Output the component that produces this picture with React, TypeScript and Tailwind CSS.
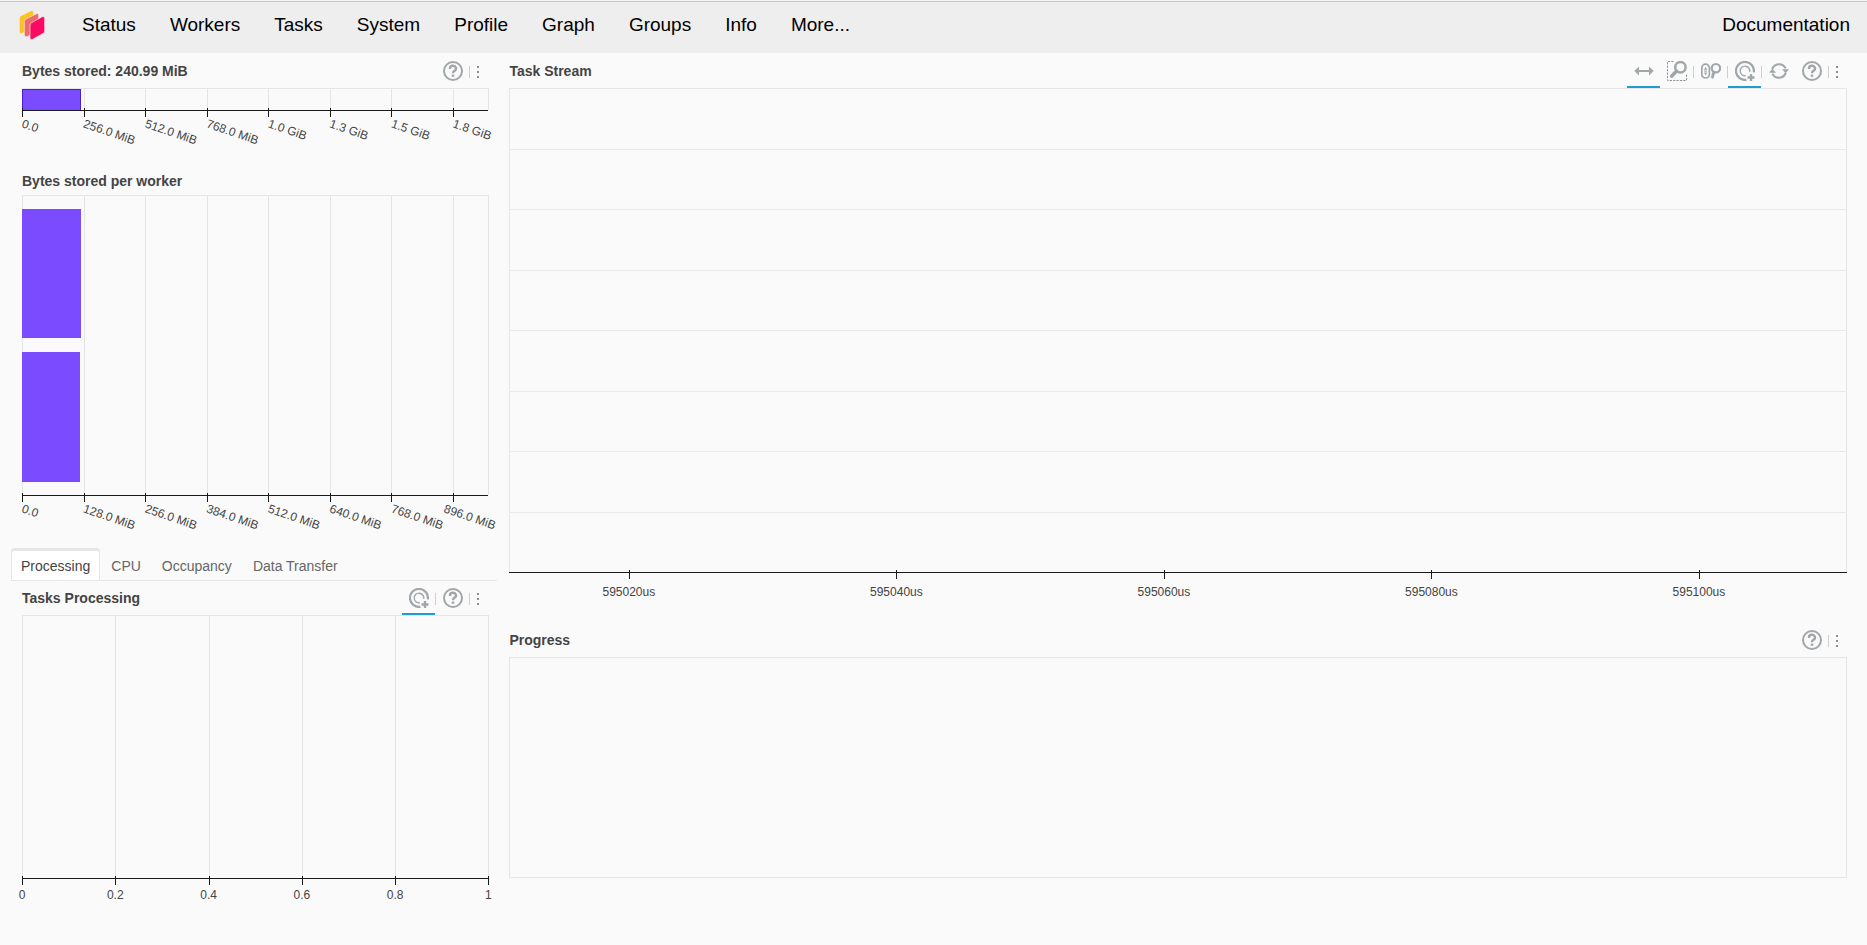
import { useState } from "react";
import type { ReactNode } from "react";
import clsx from "clsx";

interface Tick {
  at: number;
  label: string;
  shift?: number;
}

interface Bar {
  width: number;
  top: number;
  height: number;
  outlined?: boolean;
}

interface PlotProps {
  height: number;
  className: string;
  label: string;
  ticks?: Tick[];
  rows?: number;
  bars?: Bar[];
  verticalGrid?: boolean;
  slanted?: boolean;
  labelOffset?: number;
}

const NAV_ITEMS = [
  "Status",
  "Workers",
  "Tasks",
  "System",
  "Profile",
  "Graph",
  "Groups",
  "Info",
];

const TABS = ["Processing", "CPU", "Occupancy", "Data Transfer"];

const BYTE_STEP = 13.2;

const storedTicks: Tick[] = [
  "0.0",
  "256.0 MiB",
  "512.0 MiB",
  "768.0 MiB",
  "1.0 GiB",
  "1.3 GiB",
  "1.5 GiB",
  "1.8 GiB",
].map((label, i) => ({ at: i * BYTE_STEP, label }));

const workerTicks: Tick[] = [
  "0.0",
  "128.0 MiB",
  "256.0 MiB",
  "384.0 MiB",
  "512.0 MiB",
  "640.0 MiB",
  "768.0 MiB",
  "896.0 MiB",
].map((label, i) => ({ at: i * BYTE_STEP, label, shift: i === 7 ? -9 : 0 }));

const processingTicks: Tick[] = ["0", "0.2", "0.4", "0.6", "0.8", "1"].map(
  (label, i) => ({ at: i * 20, label }),
);

const streamTicks: Tick[] = [
  "595020us",
  "595040us",
  "595060us",
  "595080us",
  "595100us",
].map((label, i) => ({ at: 8.96 + i * 20, label }));

function DaskLogo() {
  return (
    <svg viewBox="0 0 72 84" className="w-6 h-7 overflow-visible" aria-hidden="true">
      <g stroke="#eeeeee" strokeWidth="2" strokeLinejoin="round">
        <path
          d="M3 14 L33 -1 Q41 -3 41 4 V46 L7 67 Q-2 70 -2 62 V21 Q-2 17 3 14Z"
          fill="#ffc11e"
        />
        <path
          d="M18 24 L50 8 Q56 6 56 12 V57 L22 77 Q13 79 13 72 V31 Q13 27 18 24Z"
          fill="#ef6b6b"
        />
        <path
          d="M35 35 L67 17 Q74 15 74 22 V61 Q74 65 70 67 L38 85 Q30 88 30 81 V42 Q30 38 35 35Z"
          fill="#fc0a62"
        />
      </g>
    </svg>
  );
}

function Icon({ children }: { children: ReactNode }) {
  return (
    <svg
      viewBox="0 0 20 20"
      className="w-5 h-5"
      fill="none"
      stroke="#a1a6a9"
      aria-hidden="true"
    >
      {children}
    </svg>
  );
}

function PanIcon() {
  return (
    <Icon>
      <path d="M3 10H17" strokeWidth="2" />
      <path d="M0.3 10L5 5.4V14.6Z M19.7 10L15 5.4V14.6Z" fill="#a1a6a9" stroke="none" />
    </Icon>
  );
}

function BoxZoomIcon() {
  return (
    <Icon>
      <path
        d="M6.5 0.5H0.5V19.5H19.5V12.5"
        strokeDasharray="2.2 1.2"
        stroke="#8f9396"
      />
      <circle cx="13.4" cy="6.2" r="5.2" strokeWidth="2.5" />
      <path d="M9.6 10L4.6 15.2" strokeWidth="3.4" strokeLinecap="round" />
    </Icon>
  );
}

function WheelZoomIcon() {
  return (
    <Icon>
      <rect x="0.8" y="3.2" width="7.6" height="13.8" rx="3.8" strokeWidth="1.7" />
      <path d="M4.6 6L6.3 8.8H2.9Z M4.6 14.2L6.3 11.4H2.9Z" fill="#a1a6a9" stroke="none" />
      <path d="M3 10.1H6.2" strokeWidth="1" />
      <circle cx="14.9" cy="7.2" r="4.2" strokeWidth="2.2" />
      <path d="M12.9 11L11.4 16.2" strokeWidth="2.8" strokeLinecap="round" />
    </Icon>
  );
}

function TapIcon() {
  return (
    <Icon>
      <path d="M18.8 11.4A9 9 0 1 0 11.4 18.8" strokeWidth="2.2" />
      <path d="M14.7 10.8A4.8 4.8 0 1 0 10.8 14.7" strokeWidth="1.4" />
      <path d="M16 13V20 M12.5 16.5H19.5" strokeWidth="2.4" />
    </Icon>
  );
}

function ResetIcon() {
  return (
    <Icon>
      <path d="M3.2 8.4A7.2 7.2 0 0 1 16.6 7.4" strokeWidth="2.1" />
      <path d="M16.8 11.6A7.2 7.2 0 0 1 3.4 12.6" strokeWidth="2.1" />
      <path d="M12.8 8.2H20L16.8 12Z M7.2 11.8H0L3.2 8Z" fill="#a1a6a9" stroke="none" />
    </Icon>
  );
}

function HelpIcon() {
  return (
    <Icon>
      <circle cx="10" cy="10" r="9" strokeWidth="2" />
      <path
        d="M7 8V7.6A3 2.7 0 1 1 11.4 9.8Q10 10.6 10 12.2"
        strokeWidth="2.4"
      />
      <path d="M10 13.6V15.8" strokeWidth="2.6" />
    </Icon>
  );
}

const TOOLS = {
  pan: { title: "Pan (x-axis)", icon: <PanIcon />, active: true, divider: false },
  boxZoom: { title: "Box Zoom", icon: <BoxZoomIcon />, active: false, divider: true },
  wheelZoom: { title: "Wheel Zoom (x-axis)", icon: <WheelZoomIcon />, active: false, divider: true },
  tap: { title: "Tap", icon: <TapIcon />, active: true, divider: true },
  reset: { title: "Reset", icon: <ResetIcon />, active: false, divider: false },
  help: { title: "Help", icon: <HelpIcon />, active: false, divider: true },
};

type Tool = keyof typeof TOOLS;

function Toolbar({ tools }: { tools: Tool[] }) {
  return (
    <div className="flex items-center pr-0.5">
      {tools.map((name) => {
        const tool = TOOLS[name];
        return (
          <div key={name} className="flex items-center">
            <button
              aria-label={tool.title}
              className={clsx(
                "flex w-[33px] h-[33px] items-center justify-center border-b-2",
                tool.active ? "border-[#1f9dd2]" : "border-transparent",
              )}
            >
              {tool.icon}
            </button>
            {tool.divider && <span className="w-px h-3 bg-[#cfcfcf]" />}
          </div>
        );
      })}
      <button
        aria-label="More tools"
        className="flex w-4 h-[33px] flex-col items-center justify-center gap-[3px]"
      >
        <span className="w-0.5 h-0.5 bg-[#8f8f8f]" />
        <span className="w-0.5 h-0.5 bg-[#8f8f8f]" />
        <span className="w-0.5 h-0.5 bg-[#8f8f8f]" />
      </button>
    </div>
  );
}

function PlotTitle({ title, tools }: { title: string; tools?: Tool[] }) {
  return (
    <div
      className={clsx(
        "flex items-start justify-between",
        tools ? "h-[33px]" : "h-[30px]",
      )}
    >
      <h2 className="pt-1.5 text-[14px] leading-5 font-bold text-[#444444]">
        {title}
      </h2>
      {tools && <Toolbar tools={tools} />}
    </div>
  );
}

function Plot({
  height,
  className,
  label,
  ticks = [],
  rows = 0,
  bars = [],
  verticalGrid = false,
  slanted = false,
  labelOffset = 21,
}: PlotProps) {
  return (
    <svg
      role="img"
      aria-label={label}
      className={clsx("block w-full overflow-visible", className)}
    >
      <g stroke="#e5e5e5" shapeRendering="crispEdges">
        <line x1="0" x2="100%" y1="0.5" y2="0.5" />
        <line x1="0.5" x2="0.5" y1="0" y2={height} />
        <line x1="100%" x2="100%" y1="0" y2={height} />
        {ticks.length === 0 && (
          <line x1="0" x2="100%" y1={height + 0.5} y2={height + 0.5} />
        )}
        {verticalGrid && (
          <g transform="translate(0.5 0)">
            {ticks.map((t) => (
              <line key={t.at} x1={`${t.at}%`} x2={`${t.at}%`} y1="0" y2={height} />
            ))}
          </g>
        )}
        {Array.from({ length: rows }, (_, i) => {
          const y = Math.round(((i + 1) * height) / (rows + 1)) + 0.5;
          return <line key={i} x1="0" x2="100%" y1={y} y2={y} stroke="#e9e9e9" />;
        })}
      </g>

      {bars.map((b) => (
        <rect
          key={b.top}
          x="0"
          y={b.top}
          width={`${b.width}%`}
          height={b.height}
          fill="#7b4bff"
          stroke={b.outlined ? "#4a1fd0" : "none"}
          shapeRendering="crispEdges"
        />
      ))}

      {ticks.length > 0 && (
        <g stroke="#1a1a1a" shapeRendering="crispEdges">
          <line x1="0" x2="100%" y1={height + 0.5} y2={height + 0.5} />
          <g transform="translate(0.5 0)">
            {ticks.map((t) => (
              <line
                key={t.at}
                x1={`${t.at}%`}
                x2={`${t.at}%`}
                y1={height - 2}
                y2={height + 7}
              />
            ))}
          </g>
        </g>
      )}

      <g fill="#444444" fontSize="12">
        {ticks.map((t) => (
          <svg key={t.at} x={`${t.at}%`} y={height} className="overflow-visible">
            {slanted ? (
              <text transform={`translate(${(t.shift ?? 0) - 1} 17) rotate(19)`}>
                {t.label}
              </text>
            ) : (
              <text y={labelOffset} textAnchor="middle">
                {t.label}
              </text>
            )}
          </svg>
        ))}
      </g>
    </svg>
  );
}

export default function App() {
  const [tab, setTab] = useState("Processing");

  return (
    <div className="min-h-screen bg-[#fafafa] font-['Liberation_Sans',Arial,sans-serif]">
      <div className="h-px bg-[#f4f4f4]" />
      <header className="flex h-[52px] items-center border-t border-[#c6c8c8] bg-[#eeeeee] pb-1.5 pl-5 pr-[17px] text-[19px] leading-6 text-black">
        <a href="#" aria-label="Dask home">
          <DaskLogo />
        </a>
        <nav className="ml-[38px] flex gap-[34px]">
          {NAV_ITEMS.map((item) => (
            <a key={item} href={`#${item.toLowerCase()}`}>
              {item}
            </a>
          ))}
          <button>More...</button>
        </nav>
        <a href="#docs" className="ml-auto">
          Documentation
        </a>
      </header>

      <main className="grid grid-cols-[4fr_11fr] gap-3 pt-0.5 pl-[11px] pr-5">
        <div>
          <section className="pl-[11px] pr-[9px]">
            <PlotTitle title="Bytes stored: 240.99 MiB" tools={["help"]} />
            <Plot
              label="Bytes stored"
              className="h-[77px]"
              height={22}
              ticks={storedTicks}
              bars={[{ width: 12.5, top: 1, height: 21, outlined: true }]}
              verticalGrid
              slanted
            />
          </section>

          <section className="pl-[11px] pr-[9px]">
            <PlotTitle title="Bytes stored per worker" />
            <Plot
              label="Bytes stored per worker"
              className="h-[353px]"
              height={300}
              ticks={workerTicks}
              bars={[
                { width: 12.6, top: 14, height: 129 },
                { width: 12.5, top: 157, height: 130 },
              ]}
              verticalGrid
              slanted
            />
          </section>

          <div
            role="tablist"
            className="mb-px flex h-[33px] gap-px border-b border-[#e6e6e6]"
          >
            {TABS.map((name) => (
              <button
                key={name}
                role="tab"
                aria-selected={tab === name}
                onClick={() => setTab(name)}
                className={clsx(
                  "px-[9px] text-[14px] leading-5 border-x border-t-3 rounded-t",
                  tab === name
                    ? "border-[#e6e6e6] bg-white text-[#444444]"
                    : "border-transparent text-[#666666]",
                )}
              >
                {name}
              </button>
            ))}
          </div>

          <section className="pl-[11px] pr-[9px]">
            <PlotTitle title="Tasks Processing" tools={["tap", "help"]} />
            <Plot
              label="Tasks Processing"
              className="h-[296px]"
              height={263}
              ticks={processingTicks}
              verticalGrid
            />
          </section>
        </div>

        <div>
          <section>
            <PlotTitle
              title="Task Stream"
              tools={["pan", "boxZoom", "wheelZoom", "tap", "reset", "help"]}
            />
            <Plot
              label="Task Stream"
              className="h-[536px]"
              height={484}
              ticks={streamTicks}
              rows={7}
              labelOffset={24}
            />
          </section>

          <section>
            <PlotTitle title="Progress" tools={["help"]} />
            <Plot label="Progress" className="h-[254px]" height={220} />
          </section>
        </div>
      </main>
    </div>
  );
}
